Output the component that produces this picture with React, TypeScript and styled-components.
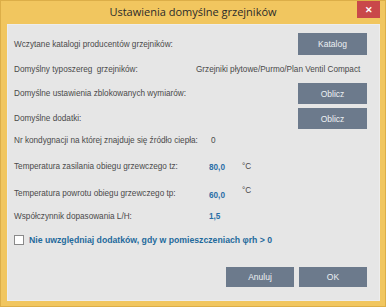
import React from "react";
import styled, { createGlobalStyle } from "styled-components";

const Global = createGlobalStyle`
  html, body {
    margin: 0;
    padding: 0;
    background: #ffffff;
  }
  * {
    box-sizing: border-box;
  }
`;

const Window = styled.div`
  width: 386px;
  height: 307px;
  display: flex;
  flex-direction: column;
  background-color: #f1c65f;
  border: 1px solid #dcae48;
`;

const TitleBar = styled.div`
  height: 23px;
  display: grid;
  grid-template-columns: 1fr auto 1fr;
  align-items: start;
`;

const Title = styled.div`
  grid-column: 2;
  padding-top: 3px;
  font-family: "Open Sans", "Noto Sans", sans-serif;
  font-size: 11px;
  color: #2b2b2b;
  white-space: nowrap;
`;

const CloseButton = styled.div`
  grid-column: 3;
  justify-self: end;
  width: 23px;
  height: 17px;
  margin: 0 5px 0 0;
  background-color: #c9484a;
  color: #ffffff;
  display: flex;
  align-items: center;
  justify-content: center;
  font-family: "Liberation Sans", sans-serif;
  font-weight: bold;
  font-size: 9px;
`;

const Panel = styled.div`
  flex: 1;
  margin: 0 5px 5px 6px;
  background-color: #e6e6e6;
  border: 1px solid #ededed;
  padding: 8px 12px 0 6px;
  display: flex;
  flex-direction: column;
  font-family: "Liberation Sans", Arial, sans-serif;
  font-size: 8.2px;
  color: #4a4a4a;
`;

const Row = styled.div<{ h: number }>`
  height: ${({ h }) => h}px;
  display: flex;
  align-items: center;
`;

const Label = styled.div<{ w?: number }>`
  width: ${({ w }) => w ?? 195}px;
  white-space: nowrap;
`;

const Spacer = styled.div`
  flex: 1;
`;

const Value = styled.div<{ blue?: boolean; shift?: number; indent?: number }>`
  margin-left: ${({ indent }) => indent ?? 0}px;
  width: 33px;
  color: ${({ blue }) => (blue ? "#2a6ea6" : "#4a4a4a")};
  font-weight: ${({ blue }) => (blue ? "bold" : "normal")};
  transform: translateY(${({ shift }) => shift ?? 0}px);
  white-space: nowrap;
`;

const Unit = styled.div<{ shift?: number }>`
  transform: translateY(${({ shift }) => shift ?? 0}px);
`;

const WideValue = styled.div`
  white-space: nowrap;
`;

const Button = styled.div<{ w: number; h: number }>`
  width: ${({ w }) => w}px;
  height: ${({ h }) => h}px;
  background-color: #6c7a8c;
  color: #edf0f3;
  display: flex;
  align-items: center;
  justify-content: center;
  font-size: 8.5px;
`;

const CheckRow = styled.label`
  height: 18px;
  display: flex;
  align-items: center;
  gap: 5px;
`;

const Box = styled.span`
  width: 10px;
  height: 10px;
  background-color: #ffffff;
  border: 1px solid #8a8a8a;
`;

const CheckText = styled.span`
  color: #1f6a9c;
  font-weight: bold;
  font-size: 8.7px;
`;

const Footer = styled.div`
  margin-top: 18px;
  display: flex;
  justify-content: flex-end;
  gap: 5px;
`;

export default function App(): JSX.Element {
  return (
    <>
      <Global />
      <Window>
        <TitleBar>
          <Title>Ustawienia domyślne grzejników</Title>
          <CloseButton>✕</CloseButton>
        </TitleBar>
        <Panel>
          <Row h={22}>
            <Label>Wczytane katalogi producentów grzejników:</Label>
            <Spacer />
            <Button w={69} h={22}>Katalog</Button>
          </Row>
          <Row h={28}>
            <Label w={182}>Domyślny typoszereg&nbsp; grzejników:</Label>
            <WideValue>Grzejniki płytowe/Purmo/Plan Ventil Compact</WideValue>
          </Row>
          <Row h={21}>
            <Label>Domyślne ustawienia zblokowanych wymiarów:</Label>
            <Spacer />
            <Button w={69} h={21}>Oblicz</Button>
          </Row>
          <Row h={29}>
            <Label>Domyślne dodatki:</Label>
            <Spacer />
            <Button w={69} h={21}>Oblicz</Button>
          </Row>
          <Row h={15}>
            <Label>Nr kondygnacji na której znajduje się źródło ciepła:</Label>
            <Value indent={2}>0</Value>
          </Row>
          <Row h={36}>
            <Label>Temperatura zasilania obiegu grzewczego tz:</Label>
            <Value blue shift={1}>80,0</Value>
            <Unit>°C</Unit>
          </Row>
          <Row h={18}>
            <Label>Temperatura powrotu obiegu grzewczego tp:</Label>
            <Value blue shift={2}>60,0</Value>
            <Unit shift={-3}>°C</Unit>
          </Row>
          <Row h={29}>
            <Label>Współczynnik dopasowania L/H:</Label>
            <Value blue>1,5</Value>
          </Row>
          <CheckRow>
            <Box />
            <CheckText>Nie uwzględniaj dodatków, gdy w pomieszczeniach φrh &gt; 0</CheckText>
          </CheckRow>
          <Footer>
            <Button w={68} h={20}>Anuluj</Button>
            <Button w={68} h={20}>OK</Button>
          </Footer>
        </Panel>
      </Window>
    </>
  );
}
